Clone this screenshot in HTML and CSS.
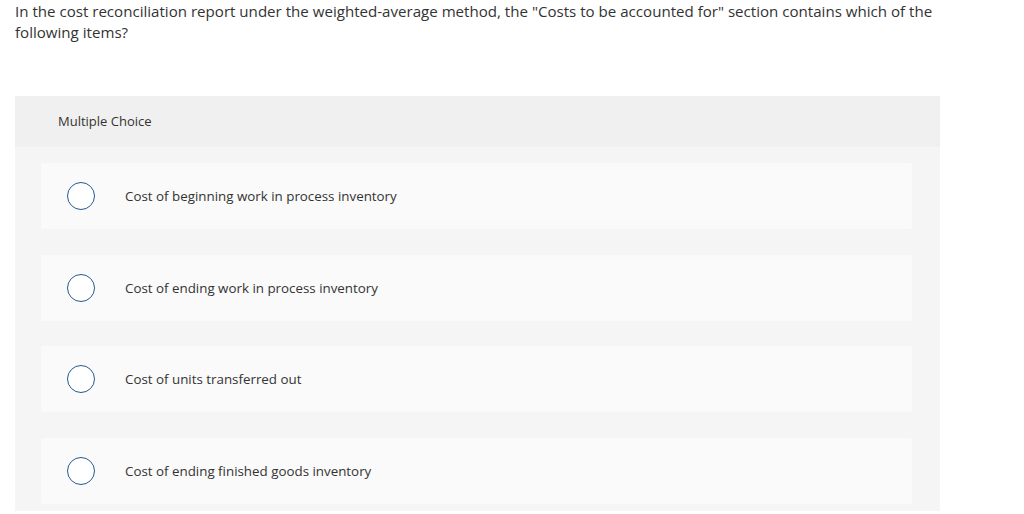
FILE: index.html
```html
<!DOCTYPE html>
<html>
<head>
<meta charset="utf-8">
<link rel="stylesheet" href="styles.css">
</head>
<body>
<div class="question">In the cost reconciliation report under the weighted-average method, the "Costs to be accounted for" section contains which of the following items?</div>
<div class="panel">
  <div class="panel-head">Multiple Choice</div>
  <div class="options">
    <div class="option"><span class="radio"></span><span class="label">Cost of beginning work in process inventory</span></div>
    <div class="option"><span class="radio"></span><span class="label">Cost of ending work in process inventory</span></div>
    <div class="option"><span class="radio"></span><span class="label">Cost of units transferred out</span></div>
    <div class="option"><span class="radio"></span><span class="label">Cost of ending finished goods inventory</span></div>
  </div>
</div>
</body>
</html>
```
FILE: styles.css
```css
html, body { margin: 0; padding: 0; background: #fff; }
body {
  font-family: "Open Sans", "Lato", sans-serif;
  color: #333;
  padding: 1px 15px 0 15px;
  width: 925px;
}
.question {
  font-size: 15.1px;
  line-height: 21px;
  width: 940px;
  margin-bottom: 53px;
}
.panel {
  background: #f5f5f5;
  width: 925px;
  padding-bottom: 7px;
}
.panel-head {
  background: #f0f0f0;
  height: 51px;
  box-sizing: border-box;
  padding: 16px 0 0 43px;
  font-size: 13px;
  line-height: 18px;
  color: #333;
}
.options {
  display: flex;
  flex-direction: column;
  gap: 25.7px;
  padding: 16px 28px 0 26px;
}
.option {
  background: #fafafa;
  border-radius: 3px;
  height: 66px;
  display: flex;
  align-items: center;
  padding-left: 26px;
}
.radio {
  width: 26px;
  height: 26px;
  border: 1.5px solid #24598f;
  border-radius: 50%;
  background: #fff;
  flex: none;
}
.label {
  margin-left: 30px;
  font-size: 13.35px;
  color: #333;
}
```
